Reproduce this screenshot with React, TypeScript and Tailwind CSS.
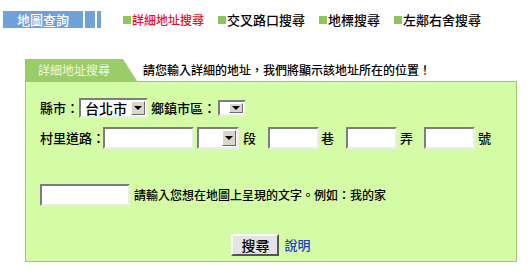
import React from "react";

const font = { fontFamily: '"Noto Sans CJK TC", "Noto Sans", sans-serif' };

function Inset({ w, h = 22 }: { w: number; h?: number }) {
  return (
    <div
      className="bg-white border-2 border-t-[#7d7d7d] border-l-[#7d7d7d] border-r-[#ececec] border-b-[#ececec] shrink-0"
      style={{ width: w, height: h }}
    />
  );
}

function Select({ w, h, label }: { w: number; h: number; label?: string }) {
  return (
    <div
      className="flex items-stretch bg-white border-2 border-t-[#7d7d7d] border-l-[#7d7d7d] border-r-[#ececec] border-b-[#ececec] shrink-0"
      style={{ width: w, height: h }}
    >
      <div className="flex-1 flex items-center pl-[4px] pr-[2px] text-[14px] text-black leading-[16px] whitespace-nowrap">{label}</div>
      <div className="w-[14px] shrink-0 my-[1px] mr-[1px] bg-[#d8d5cd] border border-t-white border-l-white border-r-[#6b6b6b] border-b-[#6b6b6b] flex items-center justify-center">
        <div className="w-0 h-0 border-l-[4px] border-r-[4px] border-t-[4px] border-l-transparent border-r-transparent border-t-black" />
      </div>
    </div>
  );
}

function NavItem({ text, active }: { text: string; active?: boolean }) {
  return (
    <div className="flex items-center">
      <span className="w-[8px] h-[8px] bg-[#8fc65a] mr-[1px]" />
      <span className={active ? "text-[12px] text-[#e5101d] font-medium" : "text-[13px] text-black font-medium"}>{text}</span>
    </div>
  );
}

export default function App() {
  return (
    <div className="w-[532px] h-[280px] bg-white overflow-hidden" style={font}>
      {/* top nav */}
      <div className="flex items-center pt-[11px] h-[28px]">
        <div className="ml-[3px] w-[80px] h-[17px] bg-[#6fa3d7] text-white text-[13px] font-medium leading-[17px] text-center">
          地圖查詢
        </div>
        <div className="ml-[2px] w-[10px] h-[17px] bg-[#6fa3d7]" />
        <div className="ml-[2px] w-[4px] h-[17px] bg-[#6fa3d7]" />
        <div className="ml-[22px] flex items-center gap-[14px]">
          <NavItem text="詳細地址搜尋" active />
          <NavItem text="交叉路口搜尋" />
          <NavItem text="地標搜尋" />
          <NavItem text="左鄰右舍搜尋" />
        </div>
      </div>

      {/* panel */}
      <div className="ml-[25px] w-[492px] mt-[31px]">
        <div className="flex items-end h-[22px]">
          <div className="w-[98px] h-[22px] bg-[#9acd68] text-[#eef8e4] text-[12px] leading-[22px] pl-[13px]">
            詳細地址搜尋
          </div>
          <div className="w-[14px] h-[22px] bg-[#9acd68] [clip-path:polygon(0_0,100%_100%,0_100%)]" />
          <div className="ml-[6px] h-[22px] leading-[22px] text-[12px] font-medium text-black">
            請您輸入詳細的地址，我們將顯示該地址所在的位置！
          </div>
        </div>
        <div className="bg-[#d4fba6] border border-[#9acd68] h-[181px] pl-[14px] pt-[16px] text-[13px] font-medium text-black">
          <div className="flex items-center h-[20px]">
            <span>縣市：</span>
            <Select w={69} h={20} label="台北市" />
            <span className="ml-[3px]">鄉鎮市區：</span>
            <div className="ml-[2px]">
              <Select w={28} h={16} />
            </div>
          </div>
          <div className="flex items-center h-[22px] mt-[9px]">
            <span className="w-[63px] whitespace-nowrap">村里道路：</span>
            <Inset w={91} />
            <div className="ml-[3px]">
              <Select w={42} h={22} />
            </div>
            <span className="ml-[4px]">段</span>
            <div className="ml-[12px]"><Inset w={51} /></div>
            <span className="ml-[2px]">巷</span>
            <div className="ml-[12px]"><Inset w={51} /></div>
            <span className="ml-[3px]">弄</span>
            <div className="ml-[11px]"><Inset w={51} /></div>
            <span className="ml-[3px]">號</span>
          </div>
          <div className="flex items-center h-[22px] mt-[35px]">
            <Inset w={90} />
            <span className="ml-[4px] text-[12px]">請輸入您想在地圖上呈現的文字。例如：我的家</span>
          </div>
          <div className="flex items-center justify-center h-[22px] mt-[28px] -ml-[14px]">
            <button className="w-[48px] h-[22px] bg-[#e4e4e4] border-2 border-t-white border-l-white border-r-[#555] border-b-[#555] text-[14px] font-medium leading-none text-black">
              搜尋
            </button>
            <a className="ml-[5px] text-[13px] text-[#1a3fc8]">說明</a>
          </div>
        </div>
      </div>
    </div>
  );
}
